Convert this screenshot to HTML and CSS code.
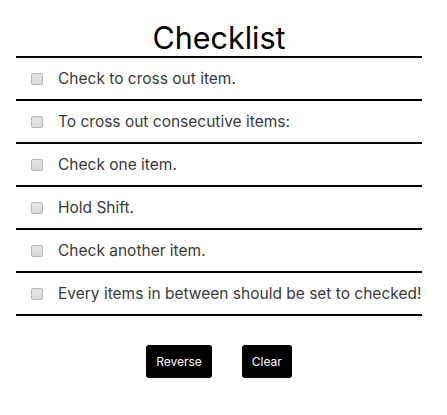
FILE: index.html
```html
<!DOCTYPE html>
<html>
<head>
<meta charset="utf-8">
<title>Checklist</title>
<link rel="stylesheet" href="styles.css">
</head>
<body>
<div class="app">
  <h1 class="title">Checklist</h1>
  <ul class="list">
    <li class="item"><input type="checkbox" class="check"><span class="label">Check to cross out item.</span></li>
    <li class="item"><input type="checkbox" class="check"><span class="label">To cross out consecutive items:</span></li>
    <li class="item"><input type="checkbox" class="check"><span class="label">Check one item.</span></li>
    <li class="item"><input type="checkbox" class="check"><span class="label">Hold Shift.</span></li>
    <li class="item"><input type="checkbox" class="check"><span class="label">Check another item.</span></li>
    <li class="item"><input type="checkbox" class="check"><span class="label">Every items in between should be set to checked!</span></li>
  </ul>
  <div class="actions">
    <button class="btn">Reverse</button>
    <button class="btn">Clear</button>
  </div>
</div>
</body>
</html>
```
FILE: styles.css
```css
body {
  margin: 8px;
  background: #fff;
  font-family: Inter, "DejaVu Sans", sans-serif;
}
.app {
  width: 406px;
  margin-left: 8px;
}
.title {
  margin: 12px 0 0;
  font-size: 30.5px;
  line-height: 36px;
  font-weight: 400;
  text-align: center;
  color: #000;
}
.list {
  list-style: none;
  margin: 0;
  padding: 0;
  border-top: 2px solid #000;
}
.item {
  display: flex;
  align-items: center;
  height: 41px;
  padding-left: 11px;
  border-bottom: 2px solid #000;
  white-space: nowrap;
}
.check {
  -webkit-appearance: none;
  appearance: none;
  box-sizing: border-box;
  width: 12px;
  height: 12px;
  margin: 3px 3px 3px 4px;
  border: 1px solid #b5b5b5;
  border-radius: 2px;
  background: linear-gradient(#e4e4e4, #dadada);
}
.label {
  margin-left: 12px;
  font-size: 15.5px;
  color: #3a3a3a;
}
.actions {
  display: flex;
  justify-content: center;
  gap: 30px;
  margin-top: 29px;
}
.btn {
  height: 33px;
  padding: 0 10px;
  border: none;
  border-radius: 3px;
  background: #000;
  color: #fff;
  font-family: Inter, "DejaVu Sans", sans-serif;
  font-size: 12px;
}
```
